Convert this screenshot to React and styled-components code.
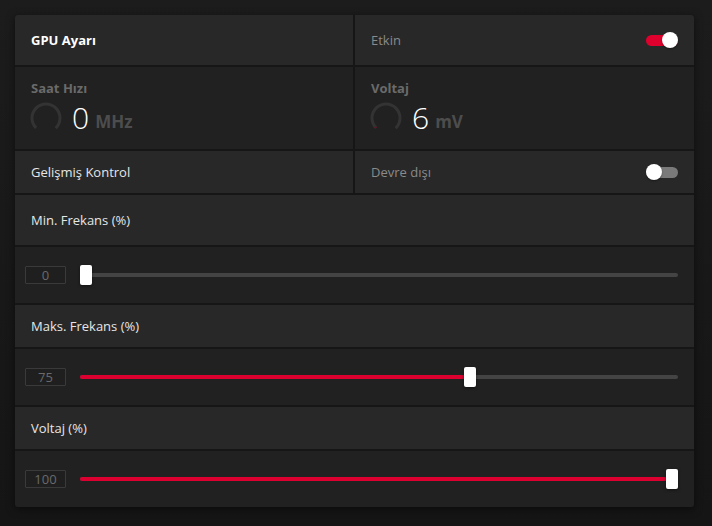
import React from "react";
import styled, { createGlobalStyle } from "styled-components";

const GlobalStyle = createGlobalStyle`
	html, body {
		margin: 0;
		padding: 0;
		background: #171717;
	}
	body {
		font-family: "Open Sans", "Noto Sans", sans-serif;
		width: 712px;
		height: 526px;
		overflow: hidden;
		background: linear-gradient(180deg, #1c1c1c 0%, #151515 100%);
	}
`;

const Page = styled.div`
	padding: 15px 18px 19px 15px;
`;

const Card = styled.div`
	background: #161616;
	border-radius: 3px;
	overflow: hidden;
	display: flex;
	flex-direction: column;
	gap: 2px;
	box-shadow: 0 2px 8px rgba(0, 0, 0, 0.5);
`;

const SplitRow = styled.div`
	display: grid;
	grid-template-columns: 338px 1fr;
	gap: 2px;
`;

const Cell = styled.div`
	height: ${(p) => p.$h}px;
	box-sizing: border-box;
	background: ${(p) => (p.$dark ? "#212121" : "#282828")};
	padding: 0 16px;
	display: flex;
	align-items: center;
	justify-content: space-between;
`;

const StatCell = styled.div`
	height: 82px;
	box-sizing: border-box;
	background: #212121;
	padding: 12px 16px 0 16px;
	display: flex;
	flex-direction: column;
`;

const Label = styled.span`
	font-size: 13px;
	color: ${(p) => p.$color || "#e6e6e6"};
	font-weight: ${(p) => (p.$bold ? 700 : 400)};
`;

const StatLabel = styled.span`
	font-size: 13px;
	font-weight: 700;
	color: #6a6a6a;
`;

const StatLine = styled.div`
	display: flex;
	align-items: center;
	margin-top: 4px;
	margin-left: -2px;
`;

const Big = styled.span`
	font-size: 30px;
	font-weight: 300;
	color: #ffffff;
	margin-left: 9px;
	line-height: 1;
`;

const Unit = styled.span`
	font-size: 17px;
	font-weight: 700;
	color: #4d4d4d;
	margin-left: 6px;
	margin-top: 6px;
`;

const Toggle = styled.div`
	position: relative;
	width: 32px;
	height: 11px;
	border-radius: 6px;
	background: ${(p) => (p.$on ? "#e0002d" : "#7a7a7a")};

	&::after {
		content: "";
		position: absolute;
		top: -2.5px;
		${(p) => (p.$on ? "right: 0;" : "left: 0;")}
		width: 16px;
		height: 16px;
		border-radius: 50%;
		background: #fff;
		box-shadow: 0 1px 2px rgba(0, 0, 0, 0.4);
	}
`;

const SliderRow = styled.div`
	height: 56px;
	background: #212121;
	display: flex;
	align-items: center;
	padding: 0 16px 0 10px;
	gap: 14px;
`;

const ValueBox = styled.div`
	width: 41px;
	height: 18px;
	box-sizing: border-box;
	border: 1px solid #3a3a3a;
	border-radius: 1px;
	background: #1f1f1f;
	color: #6a6a6a;
	font-size: 13px;
	font-weight: 400;
	display: flex;
	align-items: center;
	justify-content: center;
	line-height: 1;
`;

const Track = styled.div`
	position: relative;
	flex: 1;
	height: 4px;
	border-radius: 2px;
	background: #444;
`;

const Fill = styled.div`
	position: absolute;
	left: 0;
	top: 0;
	bottom: 0;
	border-radius: 2px;
	background: #dc0030;
`;

const Thumb = styled.div`
	position: absolute;
	top: 50%;
	width: 12px;
	height: 20px;
	margin-top: -10px;
	border-radius: 2px;
	background: #fff;
	box-shadow: 0 1px 3px rgba(0, 0, 0, 0.5);
`;

function Gauge({ value }) {
	const r = 14;
	const c = 2 * Math.PI * r;
	const arc = c * 0.75;
	return (
		<svg width="34" height="34" viewBox="0 0 34 34">
			<circle
				cx="17"
				cy="17"
				r={r}
				fill="none"
				stroke="#333"
				strokeWidth="3"
				strokeDasharray={`${arc} ${c}`}
				transform="rotate(135 17 17)"
			/>
			{value > 0 && (
				<circle
					cx="17"
					cy="17"
					r={r}
					fill="none"
					stroke="#8a0020"
					strokeWidth="2"
					strokeDasharray={`${value} ${c}`}
					transform="rotate(135 17 17)"
				/>
			)}
		</svg>
	);
}

function Slider({ value, pct }) {
	// thumb sits inside track: 0% -> left edge, 100% -> right edge
	const pos = `calc(${pct}% - ${(pct / 100) * 12}px)`;
	return (
		<SliderRow>
			<ValueBox>{value}</ValueBox>
			<Track>
				{pct > 0 && <Fill style={{ width: pos }} />}
				<Thumb style={{ left: pos }} />
			</Track>
		</SliderRow>
	);
}

export default function App() {
	return (
		<>
			<GlobalStyle />
			<Page>
				<Card>
					<SplitRow>
						<Cell $h={50}>
							<Label $bold $color="#ffffff">GPU Ayarı</Label>
						</Cell>
						<Cell $h={50}>
							<Label $color="#8a8a8a">Etkin</Label>
							<Toggle $on />
						</Cell>
					</SplitRow>
					<SplitRow>
						<StatCell>
							<StatLabel>Saat Hızı</StatLabel>
							<StatLine>
								<Gauge value={0} />
								<Big>0</Big>
								<Unit>MHz</Unit>
							</StatLine>
						</StatCell>
						<StatCell>
							<StatLabel>Voltaj</StatLabel>
							<StatLine>
								<Gauge value={1.5} />
								<Big>6</Big>
								<Unit>mV</Unit>
							</StatLine>
						</StatCell>
					</SplitRow>
					<SplitRow>
						<Cell $h={42}>
							<Label>Gelişmiş Kontrol</Label>
						</Cell>
						<Cell $h={42}>
							<Label $color="#8a8a8a">Devre dışı</Label>
							<Toggle />
						</Cell>
					</SplitRow>
					<Cell $h={50}>
						<Label>Min. Frekans (%)</Label>
					</Cell>
					<Slider value={0} pct={0} />
					<Cell $h={42}>
						<Label>Maks. Frekans (%)</Label>
					</Cell>
					<Slider value={75} pct={65.5} />
					<Cell $h={42}>
						<Label>Voltaj (%)</Label>
					</Cell>
					<Slider value={100} pct={100} />
				</Card>
			</Page>
		</>
	);
}
